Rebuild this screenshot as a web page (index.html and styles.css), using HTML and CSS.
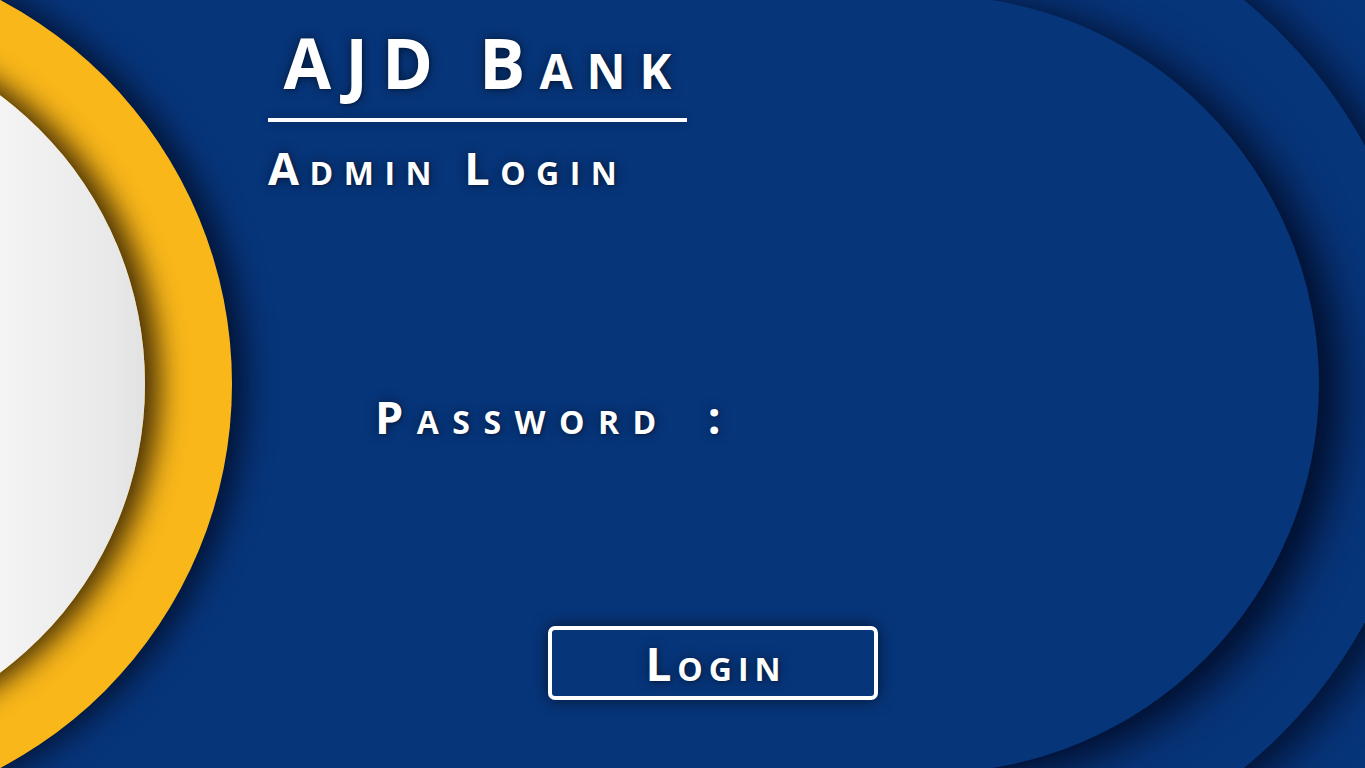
FILE: index.html
```html
<!DOCTYPE html>
<html lang="en">
<head>
<meta charset="utf-8">
<title>AJD Bank – Admin Login</title>
<link rel="stylesheet" href="styles.css">
</head>
<body>
<div class="stage">
  <div class="deco">
    <div class="ring-yellow"></div>
    <div class="disc-white"></div>
    <div class="arcs">
      <div class="arc-outer"></div>
      <div class="arc-inner"></div>
    </div>
  </div>
  <main class="content">
    <header class="brand">
      <h1 class="title">AJD Bank</h1>
      <div class="rule"></div>
      <h2 class="subtitle">Admin Login</h2>
    </header>
    <form class="login-form">
      <div class="field">
        <label class="label" for="pw">Password</label>
        <span class="colon">:</span>
        <input class="input" id="pw" type="password">
      </div>
      <button class="login-btn" type="button">Login</button>
    </form>
  </main>
</div>
</body>
</html>
```

FILE: styles.css
```css
html, body {
  margin: 0;
  padding: 0;
}
body {
  width: 1365px;
  height: 768px;
  overflow: hidden;
  background: #07357a;
  font-family: "Open Sans", "DejaVu Sans", sans-serif;
  color: #fff;
}
.stage {
  position: relative;
  width: 1365px;
  height: 768px;
  overflow: hidden;
  background: #07357a;
}
.deco {
  position: absolute;
  inset: 0;
  z-index: 0;
}
.ring-yellow,
.disc-white,
.arc-outer,
.arc-inner {
  position: absolute;
  border-radius: 50%;
}
.ring-yellow {
  left: -636px;
  top: -50px;
  width: 868px;
  height: 868px;
  background: #f9b71a;
  box-shadow: 14px 0 30px rgba(0, 8, 30, 0.75);
}
.disc-white {
  left: -575px;
  top: 24px;
  width: 720px;
  height: 720px;
  background: linear-gradient(to right, #fbfbfb 70%, #e9e9e9 95%, #e2e2e2);
  box-shadow: 14px 0 28px rgba(20, 10, 0, 0.8);
}
.arcs {
  position: absolute;
  left: 900px;
  top: 0;
  right: 0;
  bottom: 0;
  overflow: hidden;
}
.arc-outer {
  left: -466px;
  top: -112px;
  width: 992px;
  height: 992px;
  background: #07357a;
  box-shadow: 18px 6px 40px rgba(0, 5, 25, 0.75);
}
.arc-inner {
  left: -359px;
  top: -5px;
  width: 778px;
  height: 778px;
  background: #07357a;
  box-shadow: 20px 8px 44px rgba(0, 5, 25, 0.85);
}
.content {
  position: relative;
  z-index: 1;
  display: flex;
  flex-direction: column;
  padding-left: 268px;
}
.brand {
  width: 419px;
  display: flex;
  flex-direction: column;
  align-items: center;
  padding-top: 22px;
}
.title,
.subtitle,
.label,
.colon,
.login-btn {
  font-variant: small-caps;
  font-weight: 700;
  text-shadow: 0 0 12px rgba(0, 0, 0, 0.5), 1px 1px 3px rgba(0, 0, 0, 0.3);
}
.title {
  margin: 0;
  padding-left: 14px;
  font-size: 69px;
  line-height: 80px;
  letter-spacing: 14px;
}
.rule {
  align-self: stretch;
  height: 4px;
  margin-top: 16px;
  background: #fff;
  box-shadow: 0 0 8px rgba(0, 0, 0, 0.35);
}
.subtitle {
  align-self: flex-start;
  margin: 18px 0 0 0;
  font-size: 45px;
  line-height: 56px;
  letter-spacing: 10.5px;
}
.login-form {
  display: flex;
  flex-direction: column;
}
.field {
  display: flex;
  align-items: center;
  margin: 193px 0 0 107px;
  height: 56px;
}
.label {
  font-size: 45px;
  letter-spacing: 13.5px;
  line-height: 56px;
}
.colon {
  font-size: 45px;
  line-height: 56px;
  margin-left: 38px;
}
.input {
  width: 300px;
  height: 40px;
  margin-left: 20px;
  background: transparent;
  border: none;
  outline: none;
  color: #fff;
}
.login-btn {
  margin: 181px 0 0 280px;
  width: 330px;
  height: 74px;
  box-sizing: border-box;
  border: 4px solid #fff;
  border-radius: 7px;
  background: #07357a;
  color: #fff;
  font-family: "Open Sans", "DejaVu Sans", sans-serif;
  font-size: 46px;
  line-height: 60px;
  letter-spacing: 6px;
  padding: 0 0 0 6px;
  box-shadow: 0 0 16px rgba(0, 0, 0, 0.6);
  cursor: pointer;
}
```
